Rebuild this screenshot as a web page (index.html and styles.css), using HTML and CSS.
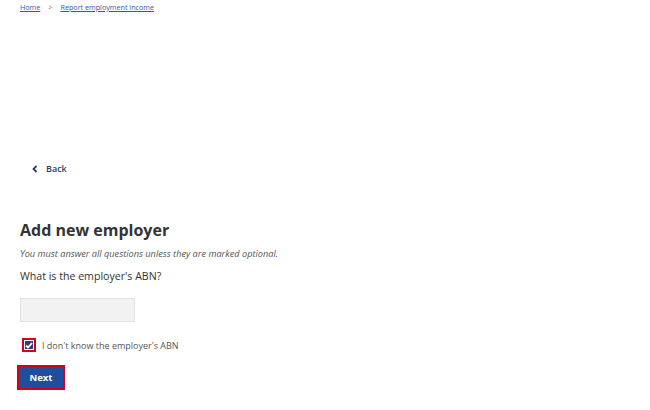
FILE: index.html
```html
<!DOCTYPE html>
<html lang="en">
<head>
    <meta charset="UTF-8">
    <title>Add new employer</title>
    <link rel="stylesheet" href="styles.css">
</head>
<body>
    <nav class="breadcrumb">
        <a href="#">Home</a>
        <span class="sep">&gt;</span>
        <a href="#">Report employment income</a>
    </nav>

    <main class="page">
        <a class="back" href="#">
            <svg width="6" height="8" viewBox="0 0 6 8"><path d="M4.5 1 L1.5 4 L4.5 7" fill="none" stroke="#2b3f73" stroke-width="1.8"/></svg>
            Back
        </a>

        <h1>Add new employer</h1>
        <p class="hint">You must answer all questions unless they are marked optional.</p>

        <label class="question" for="abn">What is the employer's ABN?</label>
        <input class="abn" id="abn" type="text" disabled>

        <label class="check">
            <span class="box">
                <svg width="8" height="7" viewBox="0 0 8 7"><path d="M1 3.5 L3 5.5 L7 1" fill="none" stroke="#fff" stroke-width="1.8"/></svg>
            </span>
            I don't know the employer's ABN
        </label>

        <button class="next" type="button">Next</button>
    </main>
</body>
</html>
```

FILE: styles.css
```css
body {
    margin: 0;
    background: #fff;
    font-family: "Open Sans", "Noto Sans", sans-serif;
    color: #333;
}

.breadcrumb {
    padding: 1px 0 0 20px;
    font-size: 7.2px;
    height: 12px;
    display: flex;
    align-items: center;
    gap: 8px;
}

.breadcrumb a {
    color: #2a5db0;
}

.breadcrumb .sep {
    color: #777;
}

.page {
    padding: 149px 20px 0;
    display: flex;
    flex-direction: column;
    align-items: flex-start;
}

.back {
    margin-left: 12px;
    display: flex;
    align-items: center;
    gap: 8px;
    font-size: 9px;
    font-weight: 600;
    color: #2b3f73;
    text-decoration: none;
}

h1 {
    margin: 43px 0 0;
    font-size: 16px;
    font-weight: 700;
    line-height: 24px;
    color: #333;
}

.hint {
    margin: 5px 0 0;
    font-size: 9.2px;
    font-style: italic;
    color: #555;
}

.question {
    margin-top: 9px;
    font-size: 10.6px;
    color: #333;
}

.abn {
    margin-top: 15px;
    width: 115px;
    height: 24px;
    box-sizing: border-box;
    background: #f2f2f2;
    border: 1px solid #e3e3e3;
}

.check {
    margin: 16px 0 0 2px;
    display: flex;
    align-items: center;
    gap: 6px;
    font-size: 9px;
    color: #555;
}

.box {
    width: 14px;
    height: 14px;
    box-sizing: border-box;
    border: 2px solid #d0021b;
    background: #2b3f73;
    box-shadow: inset 0 0 0 1px #fff;
    display: flex;
    align-items: center;
    justify-content: center;
}

.next {
    margin: 13px 0 0 -3px;
    width: 48px;
    height: 25px;
    background: #1f4e9c;
    color: #fff;
    border: 2px solid #d0021b;
    font-family: inherit;
    font-size: 9.5px;
    font-weight: 700;
}
```
